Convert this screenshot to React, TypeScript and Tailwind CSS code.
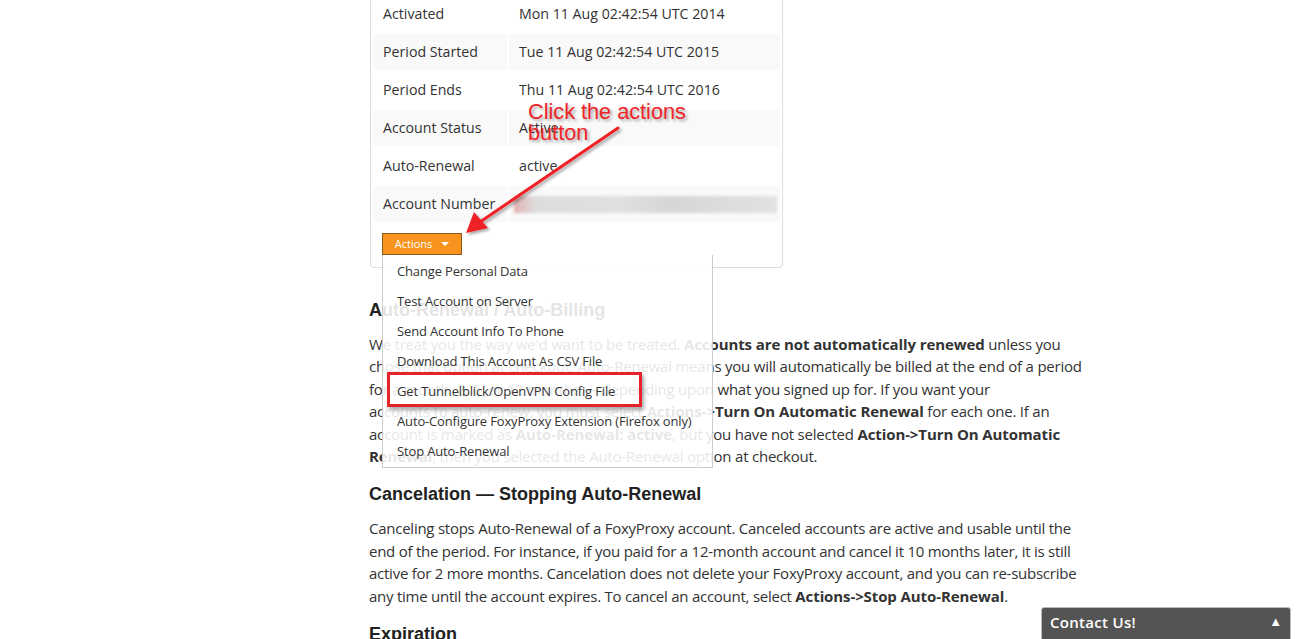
import React from "react";

const rows: [string, string][] = [
  ["Activated", "Mon 11 Aug 02:42:54 UTC 2014"],
  ["Period Started", "Tue 11 Aug 02:42:54 UTC 2015"],
  ["Period Ends", "Thu 11 Aug 02:42:54 UTC 2016"],
  ["Account Status", "Active"],
  ["Auto-Renewal", "active"],
  ["Account Number", ""],
];

const menu = [
  "Change Personal Data",
  "Test Account on Server",
  "Send Account Info To Phone",
  "Download This Account As CSV File",
  "Get Tunnelblick/OpenVPN Config File",
  "Auto-Configure FoxyProxy Extension (Firefox only)",
  "Stop Auto-Renewal",
];

function B({ children }: { children: React.ReactNode }) {
  return <b className="font-bold tracking-[-0.1px]">{children}</b>;
}

export default function App() {
  return (
    <div className="relative h-[639px] w-[1306px] overflow-hidden bg-white font-['Open_Sans',sans-serif] text-[#333]">
      <div className="ml-[369px] w-[720px]">
        {/* Account card */}
        <div className="relative -mt-[7px] ml-px w-[413px] rounded-b-[4px] border border-[#ddd] pb-[12px]">
          <table className="w-full table-fixed border-separate border-spacing-[2px] text-[14.2px]">
            <colgroup>
              <col className="w-[134px]" />
              <col />
            </colgroup>
            <tbody>
              {rows.map(([k, v], i) => (
                <tr key={k}>
                  <td
                    className={`h-[36px] whitespace-nowrap px-[10px] align-middle ${
                      i % 2 === 1 ? "bg-[#f9f9f9]" : ""
                    }`}
                  >
                    {k}
                  </td>
                  <td
                    className={`h-[36px] whitespace-nowrap px-[10px] align-middle ${
                      i % 2 === 1 ? "bg-[#f9f9f9]" : ""
                    }`}
                  >
                    {k === "Account Number" ? (
                      <div className="-ml-[5px] h-[17px] w-[263px] bg-[linear-gradient(90deg,#e4b0b0_0%,#dcdcdc_8%,#e0e0e0_40%,#d6d6d6_60%,#e2e2e2_100%)] blur-[1.5px]" />
                    ) : (
                      v
                    )}
                  </td>
                </tr>
              ))}
            </tbody>
          </table>
          <div className="relative ml-[11px] mt-[9px] w-[80px]">
            <button className="flex h-[22px] w-[80px] items-center justify-center gap-[9px] border border-[#8a5a1a] bg-[#f7941d] text-[11px] text-white">
              <span>Actions</span>
              <span className="h-0 w-0 border-x-[4px] border-t-[4px] border-x-transparent border-t-white" />
            </button>
            {/* Dropdown */}
            <div className="absolute left-0 top-full z-20 w-[331px] border border-t-0 border-[#ccc] bg-white/[0.88] pt-[2px] text-[13px] tracking-[-0.15px] text-[#333]">
              {menu.map((m) => (
                <div key={m} className="flex h-[30px] items-center whitespace-nowrap pl-[14px]">
                  {m}
                </div>
              ))}
              <div className="pointer-events-none absolute left-[4px] top-[117px] h-[35px] w-[255px] border-[3px] border-[#e8222a] shadow-[2px_3px_4px_rgba(0,0,0,0.35)]" />
            </div>
          </div>
        </div>

        {/* Auto-Renewal section */}
        <h2 className="mt-[30px] font-['Liberation_Sans',Arial,sans-serif] text-[18px] font-bold leading-[24px] text-[#222]">
          Auto-Renewal / Auto-Billing
        </h2>
        <p className="mt-[11px] text-[15px] leading-[22.4px] tracking-[-0.22px]">
          <span className="block whitespace-nowrap">
            We treat you the way we'd want to be treated. <B>Accounts are not automatically renewed</B> unless you
          </span>
          <span className="block whitespace-nowrap">
            chose that option at checkout. Auto-Renewal means you will automatically be billed at the end of a period
          </span>
          <span className="block whitespace-nowrap">
            for a month, 3, 6, or 12 months — depending upon what you signed up for. If you want your
          </span>
          <span className="block whitespace-nowrap">
            accounts to auto-renew, you must select <B>Actions-&gt;Turn On Automatic Renewal</B> for each one. If an
          </span>
          <span className="block whitespace-nowrap">
            account is marked as <B>Auto-Renewal: active</B>, but you have not selected <B>Action-&gt;Turn On Automatic</B>
          </span>
          <span className="block whitespace-nowrap">
            <B>Renewal</B>, then you selected the Auto-Renewal option at checkout.
          </span>
        </p>

        <h2 className="mt-[15px] font-['Liberation_Sans',Arial,sans-serif] text-[18px] font-bold leading-[24px] text-[#222]">
          Cancelation — Stopping Auto-Renewal
        </h2>
        <p className="mt-[11px] text-[15px] leading-[22.4px] tracking-[-0.25px]">
          <span className="block whitespace-nowrap">
            Canceling stops Auto-Renewal of a FoxyProxy account. Canceled accounts are active and usable until the
          </span>
          <span className="block whitespace-nowrap">
            end of the period. For instance, if you paid for a 12-month account and cancel it 10 months later, it is still
          </span>
          <span className="block whitespace-nowrap">
            active for 2 more months. Cancelation does not delete your FoxyProxy account, and you can re-subscribe
          </span>
          <span className="block whitespace-nowrap">
            any time until the account expires. To cancel an account, select <B>Actions-&gt;Stop Auto-Renewal</B>.
          </span>
        </p>

        <h2 className="mt-[15px] font-['Liberation_Sans',Arial,sans-serif] text-[18px] font-bold leading-[24px] text-[#222]">
          Expiration
        </h2>
      </div>

      {/* Annotation */}
      <div className="pointer-events-none absolute left-[528px] top-[101px] z-30 font-['Liberation_Sans',Arial,sans-serif] text-[21.7px] leading-[21px] text-[#ee2428] [text-shadow:2px_2px_3px_rgba(0,0,0,0.35)]">
        <div>Click the actions</div>
        <div>button</div>
      </div>
      <svg
        className="pointer-events-none absolute left-0 top-0 z-30"
        width="1306"
        height="639"
        viewBox="0 0 1306 639"
      >
        <defs>
          <filter id="sh" x="-20%" y="-20%" width="140%" height="140%">
            <feDropShadow dx="2" dy="2" stdDeviation="1.5" floodColor="#000" floodOpacity="0.35" />
          </filter>
        </defs>
        <g filter="url(#sh)">
          <line x1="618" y1="128" x2="480" y2="222" stroke="#ee2428" strokeWidth="3" strokeLinecap="round" />
          <polygon points="466,233 474,212 488,228" fill="#ee2428" />
        </g>
      </svg>

      {/* Contact Us */}
      <div className="absolute left-[1041px] top-[607px] z-30 flex h-[34px] w-[250px] items-start justify-between rounded-[3px] border border-[#bbb] bg-[#545454] px-[8px] pt-[3px] text-white">
        <span className="text-[15px] font-semibold tracking-[0.3px]">Contact Us!</span>
        <span className="pt-[1px] text-[13px]">▲</span>
      </div>
    </div>
  );
}
